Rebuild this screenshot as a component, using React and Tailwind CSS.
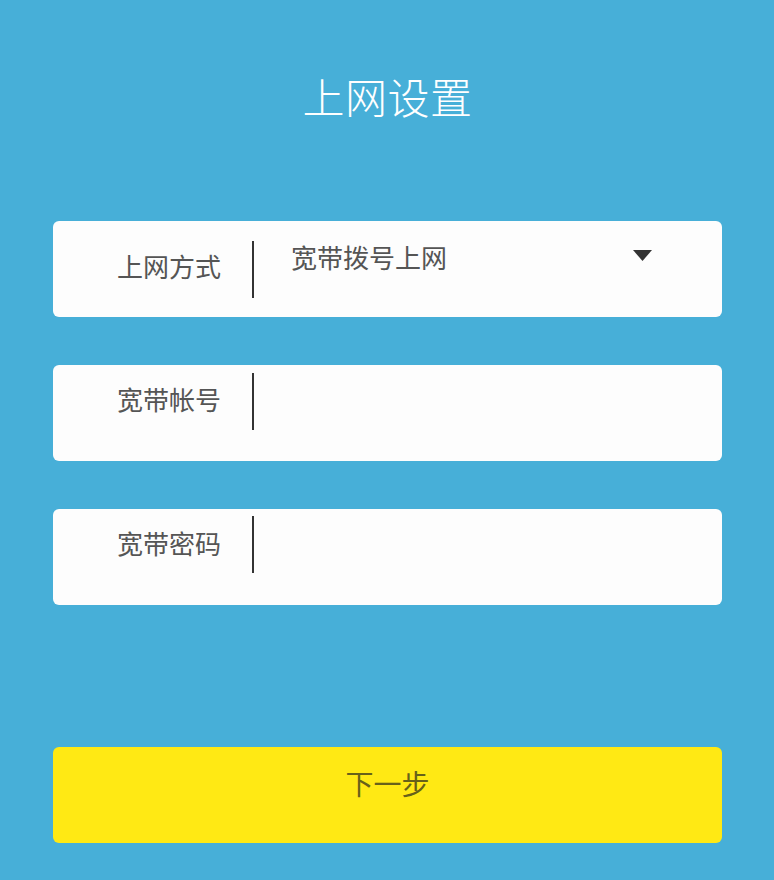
const font = { fontFamily: '"Noto Sans CJK SC", "Noto Sans", sans-serif' }

function FieldCard({ label, labelTop, lineTop, children }) {
  return (
    <div className="relative h-[96px] rounded-[6px] bg-[#fdfdfd] flex items-start pl-[64px]">
      <span className={`w-[104px] text-[26px] leading-[32px] text-[#555] ${labelTop}`}>{label}</span>
      <span className={`ml-[31px] w-[2px] h-[57px] bg-[#333] ${lineTop}`} />
      {children}
    </div>
  )
}

export default function App() {
  return (
    <div className="min-h-screen bg-[#47afd8] flex flex-col px-[53px] pr-[52px]" style={font}>
      {/* title */}
      <h1 className="pt-[72px] h-[221px] text-center text-[42px] leading-[48px] text-white font-light tracking-[0.5px]">
        上网设置
      </h1>

      <div className="flex flex-col gap-[48px]">
        <FieldCard label="上网方式" labelTop="mt-[29px]" lineTop="mt-[20px]">
          <span className="ml-[37px] mt-[20px] text-[26px] leading-[32px] text-[#555]">宽带拨号上网</span>
          <svg className="absolute right-[70px] top-[29px]" width="19" height="11" viewBox="0 0 19 11">
            <path d="M0 0 H19 L9.5 11 Z" fill="#333" />
          </svg>
        </FieldCard>
        <FieldCard label="宽带帐号" labelTop="mt-[18px]" lineTop="mt-[8px]" />
        <FieldCard label="宽带密码" labelTop="mt-[18px]" lineTop="mt-[7px]" />
      </div>

      <button
        type="button"
        className="mt-[142px] h-[96px] rounded-[6px] bg-[#ffe914] text-[28px] leading-[32px] text-[#67611a] flex justify-center items-start pt-[20px]"
      >
        下一步
      </button>
    </div>
  )
}
